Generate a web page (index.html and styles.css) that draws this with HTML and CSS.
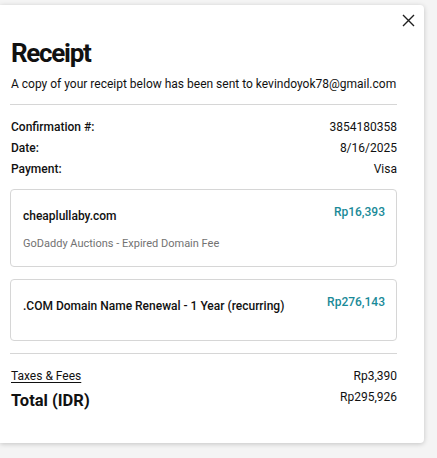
FILE: index.html
```html
<!DOCTYPE html>
<html lang="en">
<head>
<meta charset="utf-8">
<title>Receipt</title>
<link rel="stylesheet" href="styles.css">
</head>
<body>
<div class="modal">
  <button class="close" aria-label="Close">
    <svg width="13" height="13" viewBox="0 0 13 13"><path d="M1 1L12 12M12 1L1 12" stroke="#1f1f1f" stroke-width="1.4" fill="none"/></svg>
  </button>
  <h1 class="title">Receipt</h1>
  <p class="subtitle">A copy of your receipt below has been sent to kevindoyok78@gmail.com</p>
  <hr class="rule">
  <div class="meta">
    <div class="meta-row"><span class="label">Confirmation #:</span><span class="value">3854180358</span></div>
    <div class="meta-row"><span class="label">Date:</span><span class="value">8/16/2025</span></div>
    <div class="meta-row"><span class="label">Payment:</span><span class="value">Visa</span></div>
  </div>
  <div class="item item-one">
    <div class="item-main">
      <div class="item-name">cheaplullaby.com</div>
      <div class="item-desc">GoDaddy Auctions - Expired Domain Fee</div>
    </div>
    <div class="price">Rp16,393</div>
  </div>
  <div class="item item-two">
    <div class="item-main">
      <div class="item-name">.COM Domain Name Renewal - 1 Year (recurring)</div>
    </div>
    <div class="price">Rp276,143</div>
  </div>
  <hr class="rule rule-bottom">
  <div class="tax-row"><a class="tax-link" href="#">Taxes &amp; Fees</a><span class="value">Rp3,390</span></div>
  <div class="total-row"><span class="total-label">Total (IDR)</span><span class="total-value">Rp295,926</span></div>
</div>
</body>
</html>
```

FILE: styles.css
```css
html, body {
  margin: 0;
  padding: 0;
  background: #f4f4f4;
}
body {
  font-family: Roboto, "Liberation Sans", sans-serif;
  color: #111;
  width: 437px;
  height: 458px;
  overflow: hidden;
}
.modal {
  position: relative;
  margin-top: 5px;
  padding: 0 27px 0 10px;
  height: 438px;
  box-sizing: border-box;
  width: 424px;
  background: #fff;
  border-radius: 0 4px 4px 0;
  box-shadow: 0 1px 5px rgba(0,0,0,0.2);
  overflow: hidden;
}
.close {
  position: absolute;
  right: 4px;
  top: 4px;
  width: 23px;
  height: 23px;
  border: 0;
  background: none;
  padding: 0;
  display: flex;
  align-items: center;
  justify-content: center;
}
.title {
  margin: 0;
  padding-top: 32px;
  font-size: 26px;
  line-height: 32px;
  font-weight: 700;
  padding-left: 1px;
  letter-spacing: -1.3px;
}
.subtitle {
  margin: 7px 0 0;
  font-size: 12px;
  line-height: 16px;
  padding-left: 1px;
  white-space: nowrap;
}
.rule {
  border: 0;
  border-top: 1px solid #d6d6d6;
  margin: 12px 0 0;
}
.meta {
  margin-top: 14px;
  display: flex;
  flex-direction: column;
  gap: 5px;
}
.meta-row {
  display: flex;
  justify-content: space-between;
  font-size: 12px;
  line-height: 16px;
  padding-left: 1px;
}
.label { font-weight: 500; }
.item {
  border: 1px solid #d6d6d6;
  border-radius: 4px;
  display: flex;
  justify-content: space-between;
  align-items: flex-start;
  padding: 0 11px 0 12px;
  box-sizing: border-box;
  margin-top: 12px;
}
.item-one { height: 78px; }
.item-two { height: 62px; }
.item-name {
  margin-top: 18px;
  font-size: 12px;
  line-height: 16px;
  font-weight: 500;
}
.item-desc {
  margin-top: 13px;
  font-size: 11px;
  line-height: 14px;
  color: #727272;
}
.price {
  margin-top: 14px;
  font-size: 12px;
  line-height: 16px;
  font-weight: 500;
  color: #1a8a98;
}
.tax-row {
  margin-top: 14px;
  display: flex;
  justify-content: space-between;
  font-size: 12px;
  line-height: 16px;
  padding-left: 1px;
}
.tax-link {
  color: #111;
  text-decoration: underline;
  text-underline-offset: 2px;
}
.total-row {
  display: flex;
  justify-content: space-between;
  align-items: flex-start;
  margin-top: 5px;
  padding-left: 1px;
}
.total-label {
  font-size: 16.5px;
  line-height: 24px;
  font-weight: 700;
}
.total-value {
  font-size: 12px;
  line-height: 16px;
}
```
